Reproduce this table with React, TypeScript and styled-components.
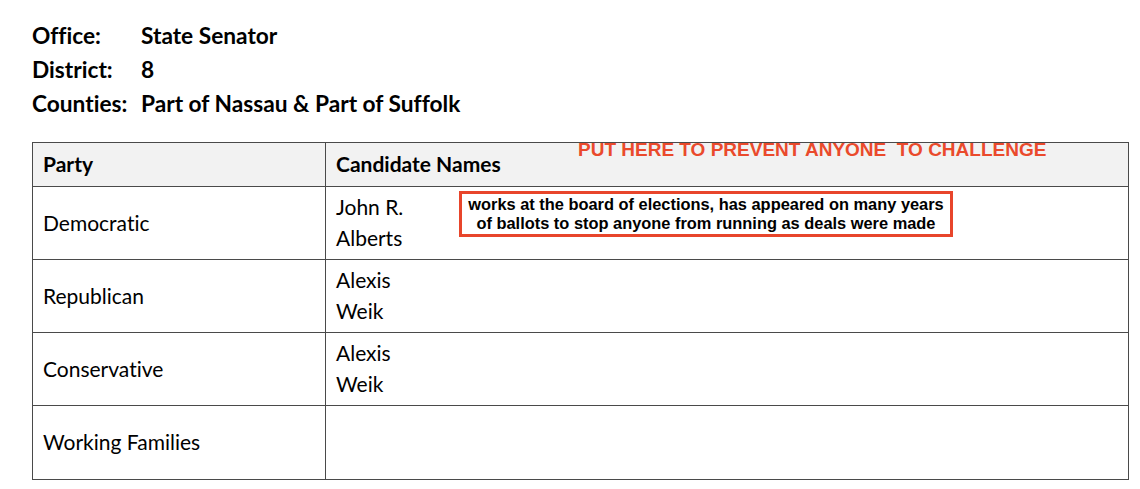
import React from "react";
import styled, { createGlobalStyle } from "styled-components";

const Global = createGlobalStyle`
  html, body { margin: 0; padding: 0; background: #ffffff; }
  body {
    font-family: Lato, "Open Sans", sans-serif;
    color: #000;
    font-variant-ligatures: none;
  }
`;

const Page = styled.div`
  padding: 18px 0 0 32px;
  width: 1097px;
`;

const Info = styled.div`
  display: grid;
  grid-template-columns: 109px auto;
  grid-auto-rows: 34px;
  align-items: center;
  font-weight: 700;
  font-size: 22.7px;
`;

const Table = styled.div`
  position: relative;
  margin-top: 22px;
  border: 1px solid #4a4a4a;
  display: grid;
  grid-template-columns: 292px 1fr;
`;

const Cell = styled.div<{ $head?: boolean; $last?: boolean; $first?: boolean }>`
  position: relative;
  display: flex;
  flex-direction: column;
  justify-content: center;
  padding: 0 0 2px 10px;
  height: ${(p) => (p.$head ? 44 : 73)}px;
  box-sizing: border-box;
  background: ${(p) => (p.$head ? "#f2f2f2" : "#fff")};
  font-weight: ${(p) => (p.$head ? 700 : 400)};
  font-size: 21px;
  line-height: 31px;
  border-bottom: ${(p) => (p.$last ? "none" : "1px solid #4a4a4a")};
  border-left: ${(p) => (p.$first ? "none" : "1px solid #4a4a4a")};
`;

const Warning = styled.div`
  position: absolute;
  z-index: 2;
  left: 545px;
  top: -4px;
  font-family: "Liberation Sans", Arial, sans-serif;
  font-weight: 700;
  font-size: 19px;
  color: #ea4a2c;
  white-space: pre;
  line-height: 21px;
`;

const Note = styled.div`
  position: absolute;
  left: 133px;
  top: 4px;
  width: 488px;
  height: 40px;
  border: 3px solid #e8452b;
  font-family: "Liberation Sans", Arial, sans-serif;
  font-weight: 700;
  font-size: 16.4px;
  line-height: 19px;
  text-align: center;
  display: flex;
  align-items: center;
  justify-content: center;
`;

const rows: { party: string; names: string[]; note?: boolean }[] = [
  { party: "Democratic", names: ["John R.", "Alberts"], note: true },
  { party: "Republican", names: ["Alexis", "Weik"] },
  { party: "Conservative", names: ["Alexis", "Weik"] },
  { party: "Working Families", names: [] },
];

export default function App() {
  return (
    <>
      <Global />
      <Page>
        <Info>
          <span>Office:</span>
          <span>State Senator</span>
          <span>District:</span>
          <span>8</span>
          <span>Counties:</span>
          <span>Part of Nassau &amp; Part of Suffolk</span>
        </Info>
        <Table>
          <Warning>PUT HERE TO PREVENT ANYONE  TO CHALLENGE</Warning>
          <Cell $head $first>Party</Cell>
          <Cell $head>Candidate Names</Cell>
          {rows.map((r, i) => {
            const last = i === rows.length - 1;
            return (
              <React.Fragment key={r.party}>
                <Cell $first $last={last}>{r.party}</Cell>
                <Cell $last={last}>
                  {r.names.map((n) => (
                    <span key={n}>{n}</span>
                  ))}
                  {r.note && (
                    <Note>
                      works at the board of elections, has appeared on many years
                      <br />
                      of ballots to stop anyone from running as deals were made
                    </Note>
                  )}
                </Cell>
              </React.Fragment>
            );
          })}
        </Table>
      </Page>
    </>
  );
}
